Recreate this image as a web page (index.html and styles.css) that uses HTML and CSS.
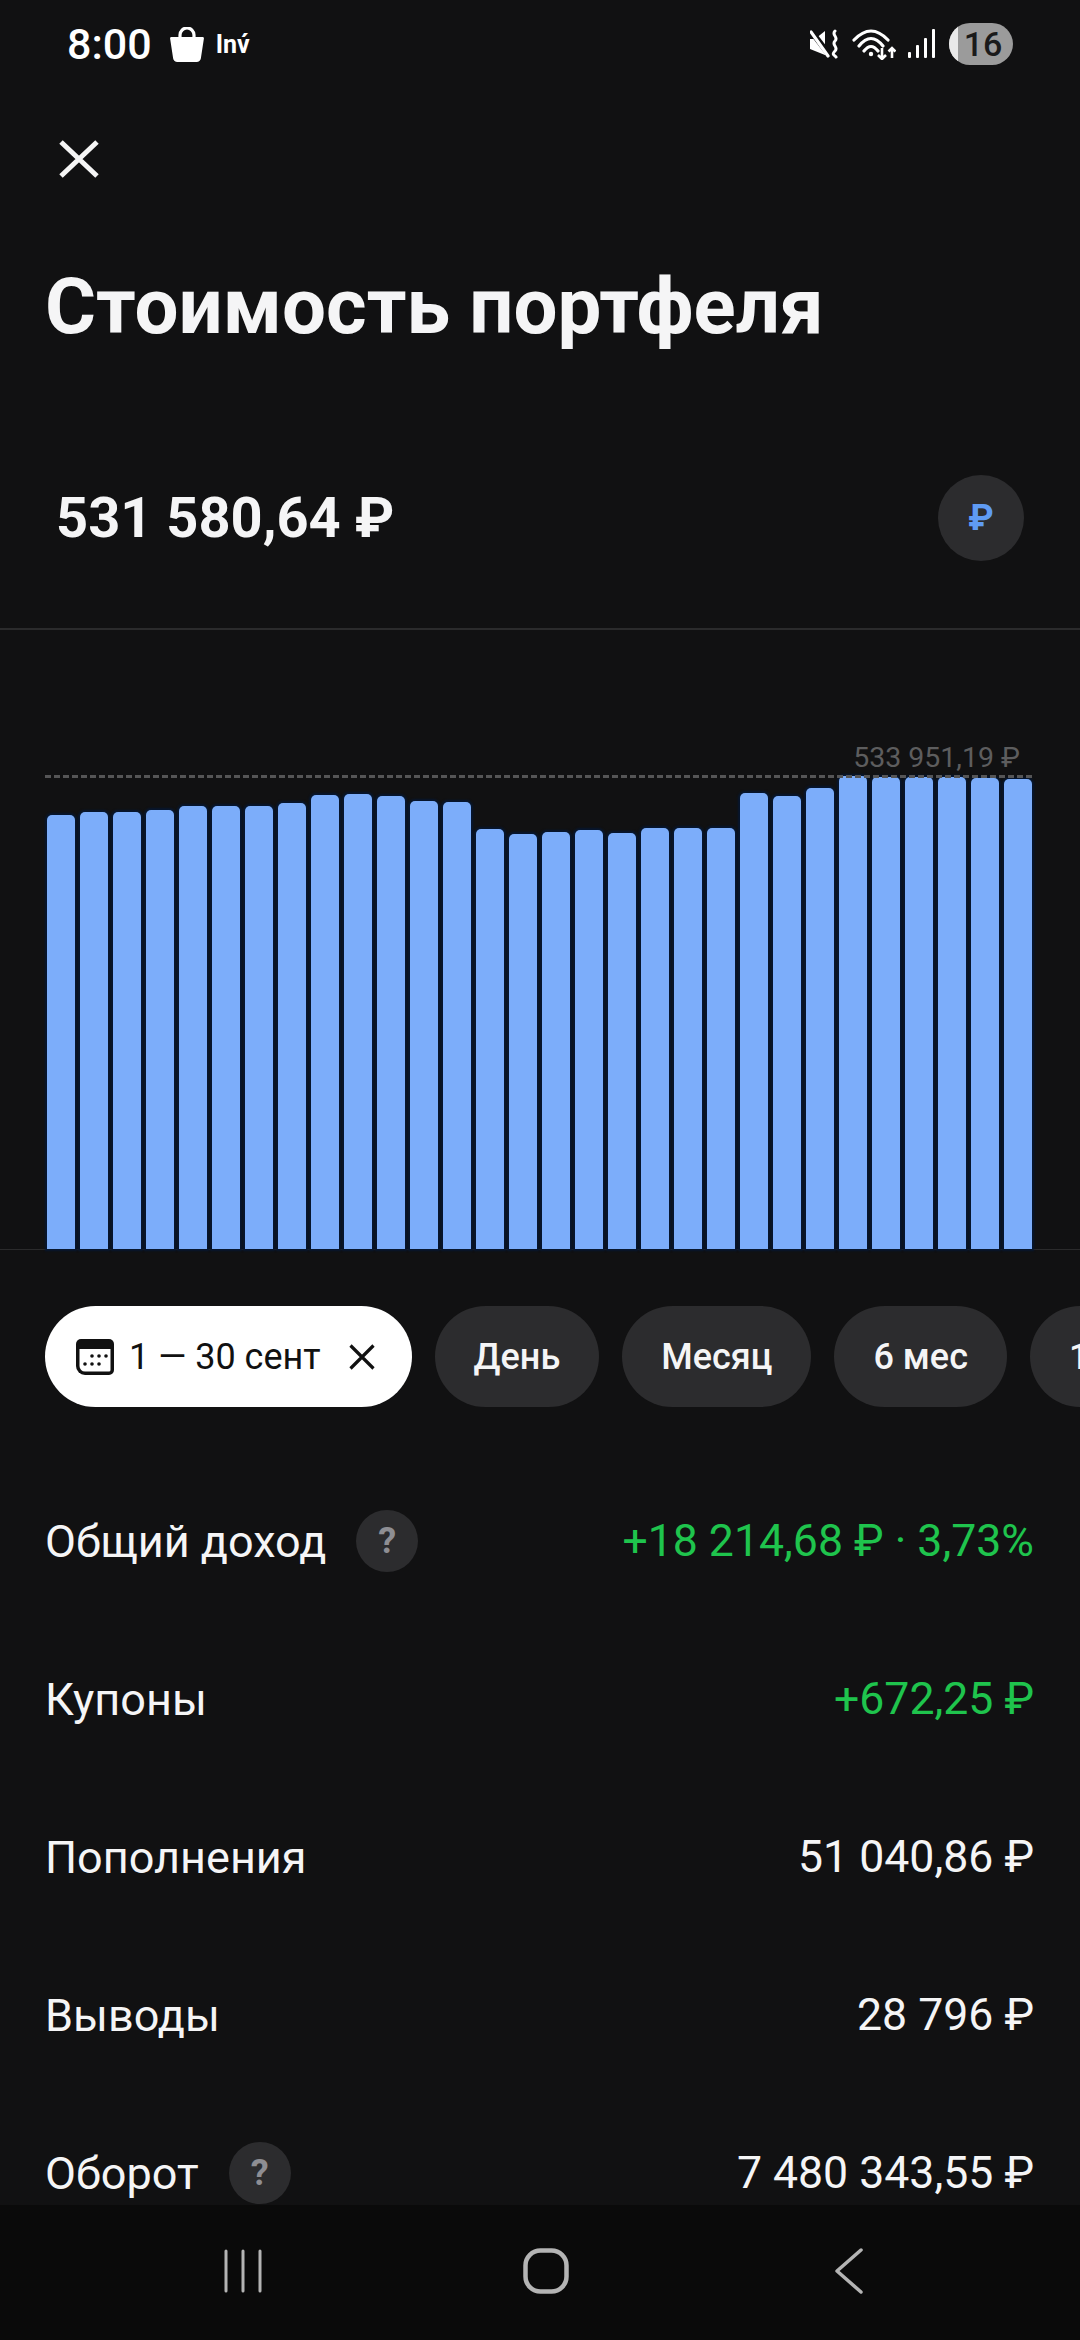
FILE: index.html
```html
<!DOCTYPE html>
<html lang="ru">
<head>
    <meta charset="UTF-8">
    <meta name="viewport" content="width=device-width, initial-scale=1.0">
    <title>Стоимость портфеля</title>
    <link rel="stylesheet" href="styles.css">
</head>
<body>
    <div class="page">
        <div class="status-bar">
            <div class="status-left">
                <span class="clock">8:00</span>
                <svg class="bag-icon" viewBox="0 0 34 35" width="34" height="35">
                    <path d="M10 11V8a7 7 0 0 1 14 0v3" fill="none" stroke="#fff" stroke-width="3.200"/>
                    <path d="M1.500 10h31a1.400 1.400 0 0 1 1.400 1.600L31 30.500a4.500 4.500 0 0 1-4.500 4.500h-19A4.500 4.500 0 0 1 3 30.500L.1 11.600A1.400 1.400 0 0 1 1.500 10z" fill="#fff"/>
                </svg>
                <span class="app-mark">Inv&#769;</span>
            </div>
            <div class="status-right">
                <svg class="mute-icon" viewBox="0 0 30 30" width="30" height="30">
                    <path d="M0 10h5L15 2v24L0 20z" fill="#fff"/>
                    <path d="M1 2l20 26" stroke="#111" stroke-width="6"/>
                    <path d="M1 3l17 24" stroke="#fff" stroke-width="3.200" stroke-linecap="round"/>
                    <path d="M25 2c-4 4 4 6 0 10s4 6 0 10 0 4 1 6" fill="none" stroke="#fff" stroke-width="3" stroke-linecap="round"/>
                </svg>
                <svg class="wifi-icon" viewBox="0 0 44 32" width="44" height="32">
                    <path d="M2 12Q19-6 36 12M7 18Q19 3 31 18M12 23Q19 14 26 23" fill="none" stroke="#fff" stroke-width="3.200" stroke-linecap="round"/>
                    <circle cx="19" cy="26" r="2.200" fill="#fff"/>
                    <path d="M30 20v11M26 27l4 4 4-4M40 30V20M36.500 23.500l3.500-3.500 3.500 3.500" fill="none" stroke="#fff" stroke-width="2.600"/>
                </svg>
                <svg class="signal-icon" viewBox="0 0 27 30" width="27" height="30">
                    <rect x="0" y="23" width="3" height="6" rx="1" fill="#fff"/>
                    <rect x="8" y="16" width="3" height="13" rx="1" fill="#fff"/>
                    <rect x="16" y="9" width="3" height="20" rx="1" fill="#fff"/>
                    <rect x="24" y="0" width="3" height="29" rx="1" fill="#fff"/>
                </svg>
                <div class="battery"><span class="battery-level"></span><span class="battery-text">16</span></div>
            </div>
        </div>

        <div class="close-row">
            <svg viewBox="0 0 40 38" width="40" height="38">
                <path d="M2 2l36 34M38 2L2 36" stroke="#f5f5f5" stroke-width="5"/>
            </svg>
        </div>

        <h1 class="title">Стоимость портфеля</h1>

        <div class="amount-row">
            <span class="amount">531 580,64 ₽</span>
            <span class="currency-btn">₽</span>
        </div>

        <div class="chart">
            <div class="max-line"></div>
            <span class="max-label">533 951,19 ₽</span>
            <div class="bar" style="height:434px"></div>
            <div class="bar" style="height:437px"></div>
            <div class="bar" style="height:437px"></div>
            <div class="bar" style="height:439px"></div>
            <div class="bar" style="height:443px"></div>
            <div class="bar" style="height:443px"></div>
            <div class="bar" style="height:443px"></div>
            <div class="bar" style="height:446px"></div>
            <div class="bar" style="height:454px"></div>
            <div class="bar" style="height:455px"></div>
            <div class="bar" style="height:453px"></div>
            <div class="bar" style="height:448px"></div>
            <div class="bar" style="height:447px"></div>
            <div class="bar" style="height:420px"></div>
            <div class="bar" style="height:415px"></div>
            <div class="bar" style="height:417px"></div>
            <div class="bar" style="height:419px"></div>
            <div class="bar" style="height:416px"></div>
            <div class="bar" style="height:421px"></div>
            <div class="bar" style="height:421px"></div>
            <div class="bar" style="height:421px"></div>
            <div class="bar" style="height:456px"></div>
            <div class="bar" style="height:453px"></div>
            <div class="bar" style="height:461px"></div>
            <div class="bar" style="height:473px"></div>
            <div class="bar" style="height:472px"></div>
            <div class="bar" style="height:472px"></div>
            <div class="bar" style="height:472px"></div>
            <div class="bar" style="height:471px"></div>
            <div class="bar" style="height:470px"></div>
        </div>

        <div class="chips">
            <div class="chip chip-active">
                <svg class="calendar-icon" viewBox="0 0 38 36" width="38" height="36">
                    <path d="M5 0h28a5 5 0 0 1 5 5v26a5 5 0 0 1-5 5H9a9 9 0 0 1-9-9V5a5 5 0 0 1 5-5z" fill="#111"/>
                    <path d="M3.500 10h31v21a1.500 1.500 0 0 1-1.500 1.500H9A5.500 5.500 0 0 1 3.500 27z" fill="#fff"/>
                    <g fill="#111">
                        <circle cx="16" cy="17" r="1.800"/><circle cx="23" cy="17" r="1.800"/><circle cx="30" cy="17" r="1.800"/>
                        <circle cx="9" cy="25" r="1.800"/><circle cx="16" cy="25" r="1.800"/><circle cx="23" cy="25" r="1.800"/>
                    </g>
                </svg>
                <span>1 — 30 сент</span>
                <svg class="chip-close" viewBox="0 0 26 26" width="26" height="26">
                    <path d="M1.500 1.500l23 23M24.500 1.500l-23 23" stroke="#111" stroke-width="3.200"/>
                </svg>
            </div>
            <div class="chip">День</div>
            <div class="chip">Месяц</div>
            <div class="chip">6 мес</div>
            <div class="chip">1 год</div>
        </div>

        <div class="rows">
            <div class="row">
                <div class="row-label">Общий доход <span class="help">?</span></div>
                <span class="value green">+18 214,68 ₽ · 3,73%</span>
            </div>
            <div class="row">
                <div class="row-label">Купоны</div>
                <span class="value green">+672,25 ₽</span>
            </div>
            <div class="row">
                <div class="row-label">Пополнения</div>
                <span class="value">51 040,86 ₽</span>
            </div>
            <div class="row">
                <div class="row-label">Выводы</div>
                <span class="value">28 796 ₽</span>
            </div>
            <div class="row">
                <div class="row-label">Оборот <span class="help">?</span></div>
                <span class="value">7 480 343,55 ₽</span>
            </div>
        </div>

        <div class="nav-bar">
            <svg viewBox="0 0 40 44" width="40" height="44">
                <path d="M3 2v40M20 2v40M37 2v40" stroke="#b4b4b4" stroke-width="3" stroke-linecap="round"/>
            </svg>
            <svg viewBox="0 0 46 46" width="46" height="46">
                <rect x="2.500" y="2.500" width="41" height="41" rx="15" fill="none" stroke="#b4b4b4" stroke-width="4.500"/>
            </svg>
            <svg viewBox="0 0 28 46" width="28" height="46">
                <path d="M26 2L2 23l24 21" fill="none" stroke="#b4b4b4" stroke-width="3.500" stroke-linecap="round" stroke-linejoin="round"/>
            </svg>
        </div>
    </div>
</body>
</html>
```
FILE: styles.css
```css
* {
    box-sizing: border-box;
}
body {
    margin: 0;
    padding: 0;
    background-color: #111112;
    font-family: Roboto, "Liberation Sans", sans-serif;
    color: #f5f5f6;
}
.page {
    width: 1080px;
    height: 2340px;
    display: flex;
    flex-direction: column;
    overflow: hidden;
}
.status-bar {
    height: 88px;
    padding: 0 67px;
    display: flex;
    justify-content: space-between;
    align-items: center;
    flex-shrink: 0;
}
.status-left {
    display: flex;
    align-items: center;
    gap: 18px;
}
.status-right {
    display: flex;
    align-items: center;
    gap: 12px;
}
.clock {
    font-size: 43px;
    font-weight: 500;
    color: #fff;
}
.app-mark {
    font-size: 25px;
    font-weight: 700;
    margin-left: -6px;
    color: #fff;
}
.battery {
    position: relative;
    width: 64px;
    height: 42px;
    margin-left: 2px;
    border-radius: 21px;
    background: #9b9b9b;
    overflow: hidden;
    display: flex;
    align-items: center;
    justify-content: center;
}
.battery-level {
    position: absolute;
    left: 0;
    top: 0;
    bottom: 0;
    width: 9px;
    background: #e9e9e9;
}
.battery-text {
    position: relative;
    font-size: 34px;
    font-weight: 500;
    color: #1a1a1a;
    margin-left: 4px;
}
.close-row {
    height: 38px;
    margin: 52px 0 0 59px;
    flex-shrink: 0;
}
.title {
    margin: 87px 0 0 45px;
    font-size: 78px;
    line-height: 84px;
    font-weight: 700;
    color: #f5f5f6;
    flex-shrink: 0;
}
.amount-row {
    height: 281px;
    padding: 59px 56px 0 56px;
    display: flex;
    justify-content: space-between;
    align-items: center;
    border-bottom: 2px solid #2b2b2c;
    flex-shrink: 0;
}
.amount {
    font-size: 56px;
    font-weight: 700;
}
.currency-btn {
    width: 86px;
    height: 86px;
    border-radius: 50%;
    background: #2c2c2e;
    color: #5f9bf3;
    font-size: 36px;
    font-weight: 700;
    display: flex;
    align-items: center;
    justify-content: center;
}
.chart {
    position: relative;
    height: 620px;
    padding-left: 47px;
    display: flex;
    align-items: flex-end;
    gap: 5px;
    border-bottom: 1px solid #2b2b2c;
    flex-shrink: 0;
}
.bar {
    width: 28px;
    border-radius: 5px 5px 0 0;
    background: #7cadfa;
    box-shadow: 0 0 2px 2px #071730;
}
.max-line {
    position: absolute;
    left: 45px;
    right: 47px;
    top: 145px;
    height: 3px;
    background: repeating-linear-gradient(90deg, #555556 0, #555556 6px, transparent 6px, transparent 9px);
}
.max-label {
    position: absolute;
    right: 60px;
    top: 112px;
    font-size: 28.500px;
    line-height: 32px;
    color: #5d5d5e;
}
.chips {
    margin-top: 56px;
    padding-left: 45px;
    display: flex;
    gap: 23px;
    flex-shrink: 0;
}
.chip {
    height: 101px;
    padding: 0 39px;
    border-radius: 51px;
    background: #2c2c2e;
    font-size: 36px;
    font-weight: 500;
    display: flex;
    align-items: center;
    flex-shrink: 0;
}
.chip-active {
    background: #fff;
    color: #111;
    font-weight: 400;
    padding: 0 37px 0 31px;
    gap: 15px;
}
.chip-close {
    margin-left: 13px;
}
.rows {
    margin-top: 55px;
    flex: 1;
    overflow: hidden;
    font-size: 45px;
}
.row {
    height: 158px;
    padding: 0 46px 0 45px;
    display: flex;
    justify-content: space-between;
    align-items: center;
}
.row-label {
    display: flex;
    align-items: center;
    gap: 30px;
}
.value {
    font-size: 44.600px;
}
.help {
    width: 62px;
    height: 62px;
    border-radius: 50%;
    background: #2c2c2e;
    color: #8e8e93;
    font-size: 36px;
    font-weight: 700;
    display: flex;
    align-items: center;
    justify-content: center;
}
.green {
    color: #1fc44d;
}
.nav-bar {
    height: 135px;
    padding: 0 0 3px 223px;
    background: #0a0a0a;
    display: flex;
    align-items: center;
    flex-shrink: 0;
}
.nav-bar svg:nth-child(1) {
    margin-right: 260px;
}
.nav-bar svg:nth-child(3) {
    margin-left: 266px;
}
```
